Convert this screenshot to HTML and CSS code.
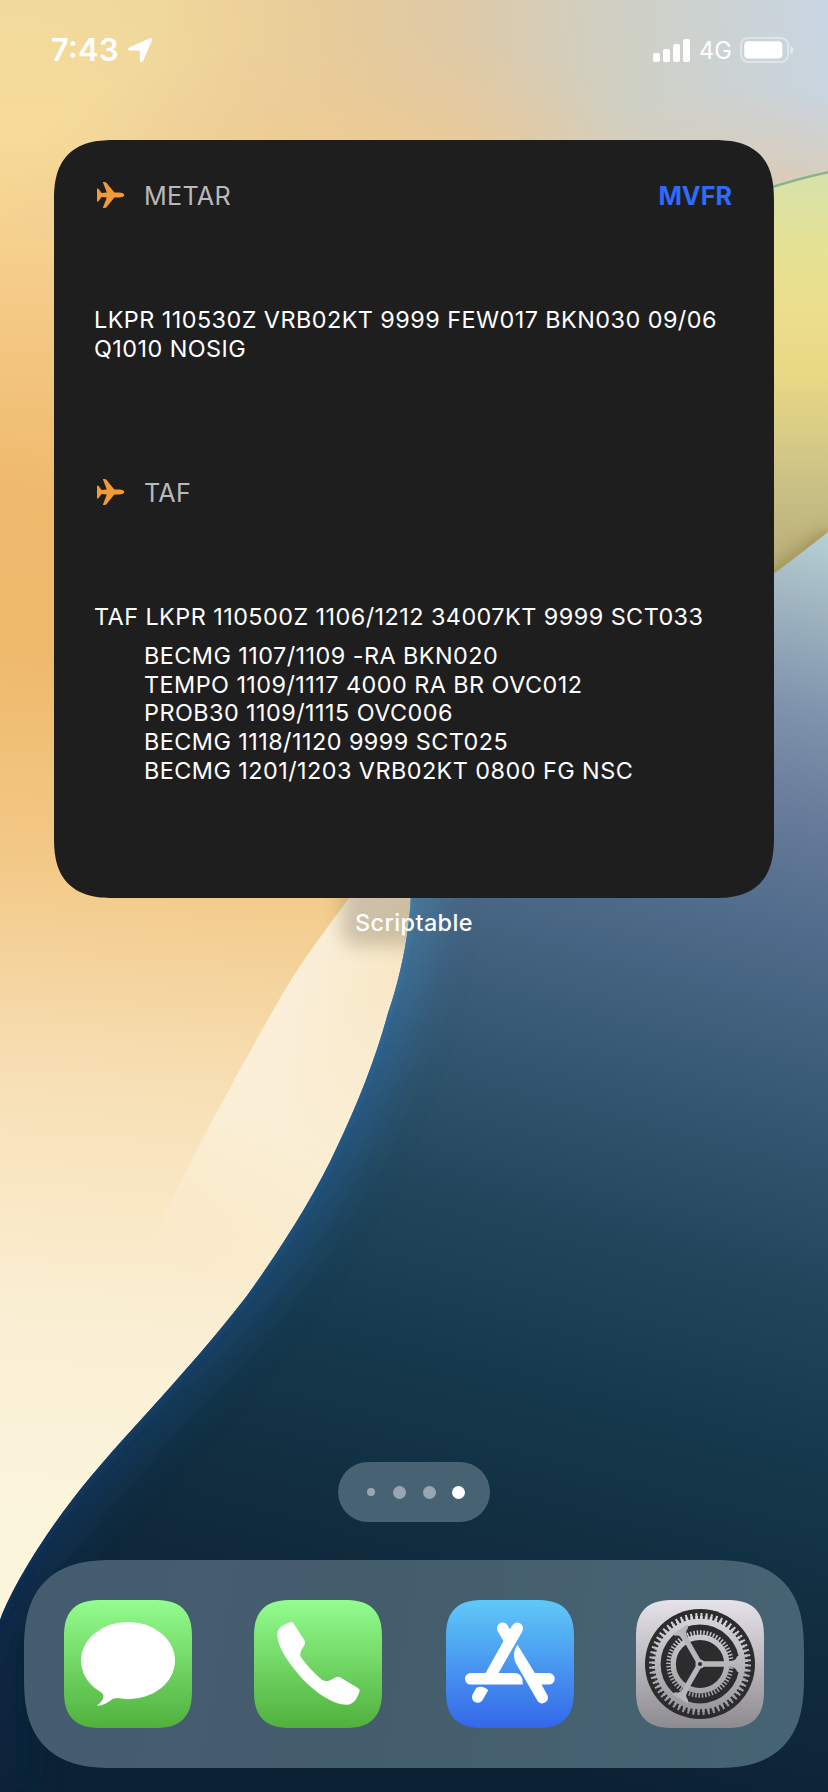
FILE: index.html
```html
<!DOCTYPE html>
<html lang="en">
<head>
<meta charset="utf-8">
<title>Home Screen</title>
<link rel="stylesheet" href="styles.css">
</head>
<body>
<svg class="wallpaper" viewBox="0 0 828 1792" aria-hidden="true">
  <defs>
    <linearGradient id="sand" gradientUnits="userSpaceOnUse" x1="0" y1="0" x2="-90" y2="1500">
      <stop offset="0" stop-color="#f1da9d"/><stop offset=".09" stop-color="#f7db99"/>
      <stop offset=".18" stop-color="#f5cd8a"/><stop offset=".33" stop-color="#efb96d"/>
      <stop offset=".43" stop-color="#eeb96b"/><stop offset=".57" stop-color="#f3c987"/>
      <stop offset=".63" stop-color="#f4d29a"/><stop offset=".71" stop-color="#f7dfb4"/>
      <stop offset=".79" stop-color="#f9e7c4"/><stop offset=".88" stop-color="#faefd4"/>
      <stop offset="1" stop-color="#fbf5dc"/>
    </linearGradient>
    <linearGradient id="haze" gradientUnits="userSpaceOnUse" x1="54" y1="60" x2="828" y2="-20">
      <stop offset="0" stop-color="#f1da9d" stop-opacity="0"/><stop offset=".22" stop-color="#edd098" stop-opacity=".8"/>
      <stop offset=".38" stop-color="#e6cb9b"/><stop offset=".52" stop-color="#dec9a7"/>
      <stop offset=".72" stop-color="#d0d0c3"/><stop offset="1" stop-color="#c8d5e2"/>
    </linearGradient>
    <radialGradient id="blush" gradientUnits="userSpaceOnUse" cx="0" cy="0" r="1" gradientTransform="translate(330 200) rotate(-4) scale(330 170)">
      <stop offset="0" stop-color="#f2c98c"/><stop offset=".5" stop-color="#eecb94" stop-opacity=".6"/>
      <stop offset="1" stop-color="#e8ca9c" stop-opacity="0"/>
    </radialGradient>
    <radialGradient id="peach" gradientUnits="userSpaceOnUse" cx="0" cy="0" r="1" gradientTransform="translate(770 215) scale(260 130)">
      <stop offset="0" stop-color="#e2c9ae"/><stop offset="1" stop-color="#dccbb4" stop-opacity="0"/>
    </radialGradient>
    <linearGradient id="leaf" gradientUnits="userSpaceOnUse" x1="800" y1="172" x2="800" y2="572">
      <stop offset="0" stop-color="#d6e2ab"/><stop offset=".18" stop-color="#e5e296"/>
      <stop offset=".34" stop-color="#ecde8c"/><stop offset=".5" stop-color="#e9d884"/>
      <stop offset=".65" stop-color="#d9cc86"/><stop offset=".8" stop-color="#c8bf85"/>
      <stop offset="1" stop-color="#b9ae77"/>
    </linearGradient>
    <linearGradient id="deep" gradientUnits="userSpaceOnUse" x1="860" y1="540" x2="540" y2="1770">
      <stop offset="0" stop-color="#b7d0d6"/><stop offset=".06" stop-color="#a0b5c0"/>
      <stop offset=".14" stop-color="#7f93ad"/><stop offset=".22" stop-color="#687b9a"/>
      <stop offset=".3" stop-color="#526d8d"/><stop offset=".38" stop-color="#42617f"/>
      <stop offset=".48" stop-color="#30546d"/><stop offset=".58" stop-color="#21465c"/>
      <stop offset=".7" stop-color="#16394d"/><stop offset=".84" stop-color="#112d3f"/>
      <stop offset="1" stop-color="#0c2234"/>
    </linearGradient>
    <linearGradient id="rim" gradientUnits="userSpaceOnUse" x1="0" y1="890" x2="0" y2="1792">
      <stop offset="0" stop-color="#4c88b0"/><stop offset=".2" stop-color="#2b669c"/>
      <stop offset=".5" stop-color="#1b4a7a"/><stop offset=".8" stop-color="#0f305a"/><stop offset="1" stop-color="#0a2340"/>
    </linearGradient>
    <linearGradient id="fold" gradientUnits="userSpaceOnUse" x1="330" y1="900" x2="200" y2="1270">
      <stop offset="0" stop-color="#faeedb"/><stop offset=".6" stop-color="#faefd6"/>
      <stop offset="1" stop-color="#fbf1d8" stop-opacity="0"/>
    </linearGradient>
    <radialGradient id="foldwarm" gradientUnits="userSpaceOnUse" cx="0" cy="0" r="1" gradientTransform="translate(395 960) rotate(20) scale(90 220)">
      <stop offset="0" stop-color="#f8e8c6"/><stop offset="1" stop-color="#f8e9c7" stop-opacity="0"/>
    </radialGradient>
    <clipPath id="deepclip"><path d="M411 880C412 930 398 985 388 1013C376 1058 357 1105 337 1147C315 1195 282 1247 246 1297C215 1337 184 1372 147 1413C115 1448 88 1478 63 1512C38 1546 12 1588 0 1620V1792H828V500H411Z"/></clipPath>
    <clipPath id="leafclip"><path d="M740 197Q785 180 828 171V532Q795 558 740 599Z"/></clipPath>
    <filter id="soft" x="-30%" y="-30%" width="160%" height="160%"><feGaussianBlur stdDeviation="22"/></filter>
    <filter id="mid" x="-50%" y="-50%" width="200%" height="200%"><feGaussianBlur stdDeviation="9"/></filter>
    <filter id="fine" x="-30%" y="-30%" width="160%" height="160%"><feGaussianBlur stdDeviation="3"/></filter>
  </defs>
  <rect width="828" height="1792" fill="url(#sand)"/>
  <rect x="54" width="774" height="240" fill="url(#haze)"/>
  <rect width="828" height="240" fill="url(#blush)"/>
  <rect x="500" width="328" height="240" fill="url(#peach)"/>
  <path d="M362 880C340 912 312 945 283 993C255 1042 214 1115 180 1183L130 1290L240 1290L420 1100V880Z" fill="url(#fold)"/>
  <path d="M362 880C340 912 312 945 283 993C255 1042 214 1115 180 1183L240 1290L420 1100V880Z" fill="url(#foldwarm)"/>
  <rect x="342" y="880" width="144" height="66" rx="14" fill="#6b5f4a" opacity=".3" filter="url(#mid)"/>
  <g clip-path="url(#deepclip)">
    <rect y="500" width="828" height="1292" fill="url(#deep)"/>
    <path d="M411 870C412 930 398 985 388 1013C376 1058 357 1105 337 1147C315 1195 282 1247 246 1297C215 1337 184 1372 147 1413C115 1448 88 1478 63 1512C38 1546 12 1588 -6 1640V1800" fill="none" stroke="url(#rim)" stroke-width="46" opacity=".7" filter="url(#soft)"/>
    <path d="M411 870C412 930 398 985 388 1013C376 1058 357 1105 337 1147C315 1195 282 1247 246 1297C215 1337 184 1372 147 1413C115 1448 88 1478 63 1512C38 1546 12 1588 0 1620" fill="none" stroke="url(#rim)" stroke-width="5" opacity=".8" filter="url(#fine)"/>
  </g>
  <g clip-path="url(#leafclip)">
    <rect x="740" y="160" width="88" height="450" fill="url(#leaf)"/>
    <path d="M740 599Q795 558 828 532" fill="none" stroke="#8f8450" stroke-width="10" opacity=".6" filter="url(#mid)"/>
    <path d="M740 599Q795 558 828 532" fill="none" stroke="#a29453" stroke-width="6" opacity=".8" filter="url(#fine)"/>
    <path d="M740 197Q785 180 828 171" fill="none" stroke="#8db08e" stroke-width="5"/>
  </g>
</svg>

<main class="screen">
  <header class="status">
    <div class="status-left">
      <span class="clock">7:43</span>
      <svg class="location" viewBox="0 0 24 25"><path fill="#fff" d="M22 .3Q24.6-.3 24 2.2L15.2 22.8Q12.6 26 11.9 22.4V14Q11.9 12.6 10.5 12.6L2 12.4Q-1.3 11.8 1 9.6Z"/></svg>
    </div>
    <div class="status-right">
      <svg class="signal" viewBox="0 0 37 23" fill="#fff"><rect y="14" width="7" height="9" rx="2"/><rect x="10" y="10" width="7" height="13" rx="2"/><rect x="20" y="5" width="7" height="18" rx="2"/><rect x="30" width="7" height="23" rx="2"/></svg>
      <span class="network">4G</span>
      <svg class="battery" viewBox="0 0 54 26"><rect x="1" y="1" width="47" height="24" rx="7" fill="none" stroke="#fff" stroke-opacity=".4" stroke-width="2"/><rect x="4.3" y="4.3" width="38" height="17.2" rx="4" fill="#fff"/><path d="M50.4 9Q53.4 10.2 53.4 13T50.4 17Z" fill="#fff" fill-opacity=".5"/></svg>
    </div>
  </header>

  <section class="widget">
    <div class="heading">
      <svg class="plane" viewBox="0 0 28 26"><path d="M27.3 13C27.3 11.4 25.2 10.5 22 10.5H17.4L9.6 1Q8.8 0 7.5 0H5.8L9.8 10.5L4.6 10.9L1.7 7Q1 6.5 0 6.5V19.5Q1 19.5 1.7 19L4.6 15.1L9.8 15.5L5.8 26H7.5Q8.8 26 9.6 25L17.4 15.5H22C25.2 15.5 27.3 14.6 27.3 13Z"/></svg>
      <h2>METAR</h2>
      <strong class="category">MVFR</strong>
    </div>
    <p class="report metar">LKPR 110530Z VRB02KT 9999 FEW017 BKN030 09/06<br>Q1010 NOSIG</p>
    <div class="heading">
      <svg class="plane" viewBox="0 0 28 26"><path d="M27.3 13C27.3 11.4 25.2 10.5 22 10.5H17.4L9.6 1Q8.8 0 7.5 0H5.8L9.8 10.5L4.6 10.9L1.7 7Q1 6.5 0 6.5V19.5Q1 19.5 1.7 19L4.6 15.1L9.8 15.5L5.8 26H7.5Q8.8 26 9.6 25L17.4 15.5H22C25.2 15.5 27.3 14.6 27.3 13Z"/></svg>
      <h2>TAF</h2>
    </div>
    <p class="report taf">TAF LKPR 110500Z 1106/1212 34007KT 9999 SCT033</p>
    <ul class="report changes">
      <li>BECMG 1107/1109 -RA BKN020</li>
      <li>TEMPO 1109/1117 4000 RA BR OVC012</li>
      <li>PROB30 1109/1115 OVC006</li>
      <li>BECMG 1118/1120 9999 SCT025</li>
      <li>BECMG 1201/1203 VRB02KT 0800 FG NSC</li>
    </ul>
  </section>
  <p class="label">Scriptable</p>

  <div class="pager"><i class="dot small"></i><i class="dot"></i><i class="dot"></i><i class="dot active"></i></div>

  <nav class="dock">
    <div class="app green"><svg viewBox="0 0 128 128" fill="#fff"><ellipse cx="64" cy="60.6" rx="47" ry="38.7"/><path d="M36 90L39 94.5Q40.3 97 38 100.5Q36 103.5 33.5 105Q32.8 106 34.3 105.8Q42 104.5 48.5 99Q50 98 52 98.2L62 97Z"/></svg></div>
    <div class="app green"><svg viewBox="0 0 128 128" fill="#fff"><path d="M35.5 22.6Q38.2 21.2 39.7 23.5L50.5 40.5Q51.7 42.7 50.5 44.8L47 51Q45.5 55 47 57.2C53 65.5 61 74 68 79.7Q71.5 82.3 76 80.3L82 77.3Q84.5 76.3 86.5 77.5L103.5 87.8Q106.3 89.5 105.5 91.8C103 99 99.5 104 94 104.7C80 105.5 60 92 46 76C32 60 23 45 23.3 34C23.5 28 29 25 35.5 22.6Z"/></svg></div>
    <div class="app blue"><svg viewBox="0 0 128 128" fill="#fff">
      <path d="M71.3 28.3L63 43M56.7 28.3L64 41" fill="none" stroke="#fff" stroke-width="11.4" stroke-linecap="round"/>
      <path d="M66.3 25.5L76.3 31.2L52.3 73.4H39.3Z"/>
      <path d="M24.7 73.1H69Q77.3 73.5 76.7 84.6H24.7A5.7 5.7 0 0 1 24.7 73.1Z"/>
      <path d="M71.7 45L88.8 73.1H103A5.7 5.7 0 0 1 103 84.6H95.5L101.2 94.8A5.7 5.7 0 0 1 91.3 100.5L70 63.5C67.3 58 67 50 71.7 45Z"/>
      <path d="M30.4 87.7Q37 84.8 42.2 90.2L36.6 99.9A5.7 5.7 0 0 1 26.7 94.2Z"/>
    </svg></div>
    <div class="app gray"><svg viewBox="0 0 128 128">
      <defs><linearGradient id="metal" gradientUnits="userSpaceOnUse" x1="0" y1="8" x2="0" y2="122"><stop offset="0" stop-color="#dcdbe0"/><stop offset="1" stop-color="#929095"/></linearGradient></defs>
      <circle cx="64" cy="64" r="55" fill="#2c2c2c"/>
      <g fill="none" stroke="url(#metal)">
        <circle cx="64" cy="64" r="42.3" stroke-width="5.8"/>
        <circle cx="64" cy="64" r="46" stroke-width="4" pathLength="120" stroke-dasharray="1.15 .85"/>
        <circle cx="64" cy="64" r="49" stroke-width="4" pathLength="120" stroke-dasharray=".8 1.2" stroke-dashoffset="-.175"/>
        <circle cx="64" cy="64" r="26.8" stroke-width="5.4"/>
        <circle cx="64" cy="64" r="31.5" stroke-width="4.4" pathLength="120" stroke-dasharray=".9 1.1"/>
      </g>
      <g fill="url(#metal)">
        <path d="M64 61.3H94Q99.5 61.3 101 56.5L104 55V73L101 71.5Q99.5 66.7 94 66.7H64Z"/>
        <path d="M64 61.3H94Q99.5 61.3 101 56.5L104 55V73L101 71.5Q99.5 66.7 94 66.7H64Z" transform="rotate(120 64 64)"/>
        <path d="M64 61.3H94Q99.5 61.3 101 56.5L104 55V73L101 71.5Q99.5 66.7 94 66.7H64Z" transform="rotate(240 64 64)"/>
        <circle cx="64" cy="64" r="4.6"/>
      </g>
      <circle cx="64" cy="64" r="2.1" fill="#2c2c2c"/>
    </svg></div>
  </nav>
</main>
</body>
</html>
```
FILE: styles.css
```css
* { box-sizing: border-box; margin: 0; padding: 0; }
body {
  width: 828px;
  height: 1792px;
  overflow: hidden;
  font-family: Inter, "Liberation Sans", sans-serif;
  color: #fff;
}
.wallpaper { position: absolute; inset: 0; width: 828px; height: 1792px; }
.screen {
  position: relative;
  height: 1792px;
  display: flex;
  flex-direction: column;
}
.status {
  height: 140px;
  padding: 34px 34px 0 51px;
  display: flex;
  justify-content: space-between;
  align-items: flex-start;
}
.status-left, .status-right { display: flex; align-items: center; height: 32px; }
.clock { width: 69px; margin-right: 8px; font-size: 31px; font-weight: 600; line-height: 32px; letter-spacing: .2px; white-space: nowrap; font-feature-settings: "case"; }
.location { width: 24px; height: 25px; }
.signal { width: 37px; height: 23px; margin-right: 9px; }
.network { width: 33px; margin-right: 8px; font-size: 23.6px; font-weight: 400; line-height: 32px; padding-top: 1px; }
.battery { width: 54px; height: 26px; }

.widget {
  height: 758px;
  margin: 0 54px;
  padding: 36px 42px 0 40px;
  background: #1e1e1e;
  border-radius: 49px;
}
.heading { display: flex; align-items: center; height: 40px; }
.plane { width: 28px; height: 26px; margin: -2px 19px 0 3px; fill: #f19a37; }
.heading h2 { font-size: 25.2px; font-weight: 400; line-height: 40px; letter-spacing: .25px; color: #b9b9b9; }
.category { margin-left: auto; font-size: 25.2px; font-weight: 700; color: #2f6bff; }
.report { font-size: 23.4px; line-height: 28.7px; letter-spacing: .45px; white-space: nowrap; }
.metar { margin: 90px 0 109.6px; }
.taf { margin-top: 90px; }
.changes { margin: 10.3px 0 0 50px; list-style: none; }

.label { flex: 0 0 50px; line-height: 50px; font-size: 23.4px; font-weight: 500; letter-spacing: .4px; text-align: center; }

.pager {
  width: 152px;
  height: 60px;
  margin: 514px auto 38px;
  padding: 0 25px 0 26px;
  display: flex;
  align-items: center;
  justify-content: space-between;
  background: #476273;
  border-radius: 30px;
}
.dot { width: 13px; height: 13px; border-radius: 50%; background: #97a7b1; }
.dot.small { width: 8px; height: 8px; margin: 0 2.5px; }
.dot.active { background: #fff; }

.dock {
  width: 780px;
  height: 208px;
  margin: 0 auto;
  padding: 40px;
  display: grid;
  grid-template-columns: 190px 192px 190px 128px;
  background: linear-gradient(100deg, #455c70, #445d6c 45%, #476474);
  border-radius: 74px;
}
.app { width: 128px; height: 128px; border-radius: 30px; overflow: hidden; }
.app svg { display: block; width: 128px; height: 128px; }
.green { background: linear-gradient(#93fd8f, #50b03c); }
.blue { background: linear-gradient(#5fc9f8, #3467e9); }
.gray { background: linear-gradient(#e5e3e9, #8d8b90); }

/* Continuous-curvature corners where the browser can draw them */
@supports (corner-shape: superellipse(1.4)) {
  .widget, .dock, .app { corner-shape: superellipse(1.4); }
  .widget { border-radius: 62px; }
  .dock { border-radius: 92px; }
  .app { border-radius: 38px; }
}
```
